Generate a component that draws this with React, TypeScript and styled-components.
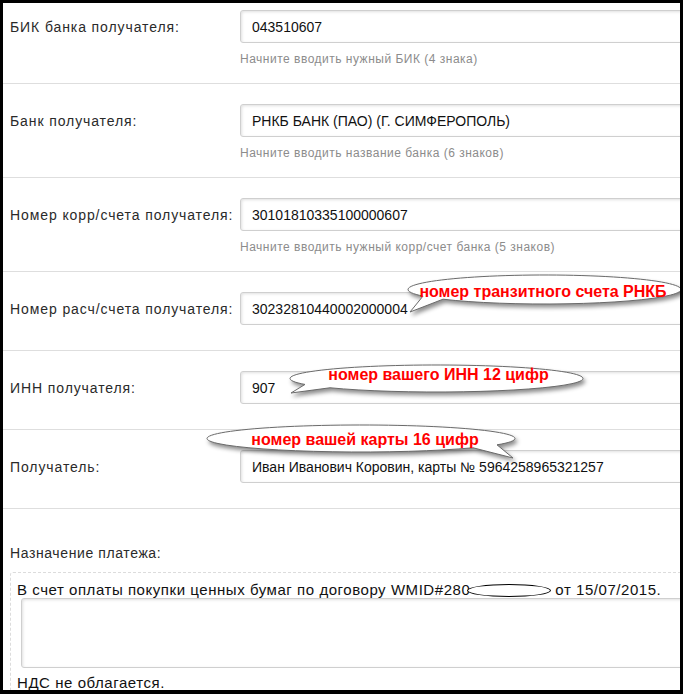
import React from "react";
import styled, { createGlobalStyle } from "styled-components";

const GlobalStyle = createGlobalStyle`
  html, body {
    margin: 0;
    padding: 0;
    background: #000;
  }
  body {
    font-family: "Liberation Sans", Arial, sans-serif;
  }
`;

const Frame = styled.div`
  width: 683px;
  height: 694px;
  box-sizing: border-box;
  padding: 3px 3px 4px 3px;
  background: #000;
`;

const Panel = styled.div`
  width: 100%;
  height: 100%;
  background: #fff;
  overflow: hidden;
`;

const Form = styled.div`
  margin-top: -13px;
`;

const Row = styled.div<{ $hint?: boolean }>`
  position: relative;
  display: grid;
  grid-template-columns: 230px 1fr;
  align-items: center;
  padding: 20px 0 ${(p) => (p.$hint ? 16 : 25)}px 7px;
  border-bottom: 1px solid #dedede;
`;

const Label = styled.div`
  font-size: 14px;
  letter-spacing: 0.9px;
  color: #2a2a2a;
  white-space: nowrap;
`;

const Field = styled.input`
  width: 520px;
  height: 33px;
  box-sizing: border-box;
  padding: 0 11px;
  border: 1px solid #cfcfcf;
  border-radius: 3px;
  box-shadow: inset 1px 1px 3px rgba(0, 0, 0, 0.12);
  font-family: "Liberation Sans", Arial, sans-serif;
  font-size: 14px;
  color: #111;
  background: #fff;
  outline: none;
`;

const Hint = styled.div`
  grid-column: 2;
  margin-top: 8px;
  font-size: 12px;
  letter-spacing: 0.5px;
  line-height: 16px;
  color: #8c8c8c;
  white-space: nowrap;
`;

const Purpose = styled.div`
  padding: 36px 0 0 7px;
`;

const PurposeTitle = styled.div`
  font-size: 14px;
  letter-spacing: 0.6px;
  line-height: 16px;
  color: #2a2a2a;
`;

const DashedBox = styled.div`
  margin-top: 11px;
  width: 700px;
  padding: 9px 0 0 6px;
  border: 1px dashed #dcdcdc;
  border-radius: 3px;
`;

const Line = styled.div`
  font-size: 15px;
  letter-spacing: 0.55px;
  line-height: 16px;
  color: #111;
  white-space: nowrap;
`;

const Redacted = styled.span`
  display: inline-block;
  width: 84px;
  height: 13px;
  margin: 0 4px 0 -3px;
  vertical-align: -2px;
  box-sizing: border-box;
  border: 1px solid #000;
  border-radius: 50%;
  background: #fff;
`;

const TextArea = styled.div`
  margin: 0 0 7px 4px;
  height: 70px;
  box-sizing: border-box;
  border: 1px solid #cfcfcf;
  border-radius: 3px;
  box-shadow: inset 1px 1px 3px rgba(0, 0, 0, 0.12);
`;

const BubbleBox = styled.div`
  position: absolute;
  pointer-events: none;
  z-index: 2;

  svg {
    position: absolute;
    left: 0;
    top: 0;
    overflow: visible;
    filter: drop-shadow(2px 3px 2px rgba(0, 0, 0, 0.45));
  }
`;

const BubbleText = styled.div`
  position: absolute;
  display: flex;
  align-items: center;
  justify-content: center;
  font-family: "Liberation Sans", Arial, sans-serif;
  font-weight: bold;
  font-size: 16px;
  color: #ff0000;
  white-space: nowrap;
`;

type CalloutProps = {
  cx: number;
  cy: number;
  rx: number;
  ry: number;
  tail: [number, number, number, number];
  shift?: [number, number];
  children: React.ReactNode;
};

const PAD = 8;

const Callout = ({ cx, cy, rx, ry, tail, shift = [0, 0], children }: CalloutProps) => {
  const [b1, b2, tipX, tipY] = tail;
  const x0 = Math.min(cx - rx, tipX) - PAD;
  const y0 = cy - ry - PAD;
  const w = Math.max(cx + rx, tipX) + PAD - x0;
  const h = Math.max(cy + ry, tipY) + PAD - y0;
  const lx = (x: number) => x - x0;
  const ly = (y: number) => y - y0;
  const edge = (x: number) => cy + ry * Math.sqrt(Math.max(0, 1 - ((x - cx) / rx) ** 2));
  const d = `M ${lx(b1)} ${ly(edge(b1))} L ${lx(tipX)} ${ly(tipY)} L ${lx(b2)} ${ly(edge(b2))} A ${rx} ${ry} 0 1 0 ${lx(b1)} ${ly(edge(b1))} Z`;

  return (
    <BubbleBox style={{ left: x0, top: y0, width: w, height: h }}>
      <svg width={w} height={h}>
        <path d={d} fill="#fff" stroke="#6a6a6a" strokeWidth={1} />
      </svg>
      <BubbleText
        style={{ left: lx(cx - rx) + shift[0], top: ly(cy - ry) + shift[1], width: rx * 2, height: ry * 2 }}
      >
        {children}
      </BubbleText>
    </BubbleBox>
  );
};

const fields = [
  { label: "БИК банка получателя:", value: "043510607", hint: "Начните вводить нужный БИК (4 знака)" },
  { label: "Банк получателя:", value: "РНКБ БАНК (ПАО) (Г. СИМФЕРОПОЛЬ)", hint: "Начните вводить название банка (6 знаков)" },
  {
    label: "Номер корр/счета получателя:",
    value: "30101810335100000607",
    hint: "Начните вводить нужный корр/счет банка (5 знаков)",
  },
];

const App = () => {
  return (
    <Frame>
      <GlobalStyle />
      <Panel>
        <Form>
          {fields.map((f) => (
            <Row $hint key={f.label}>
              <Label>{f.label}</Label>
              <Field readOnly value={f.value} />
              <Hint>{f.hint}</Hint>
            </Row>
          ))}
          <Row>
            <Label>Номер расч/счета получателя:</Label>
            <Field readOnly value="30232810440002000004" />
            <Callout cx={541.5} cy={17.5} rx={136.5} ry={14.5} tail={[420, 440, 407, 40]} shift={[-1.5, 2.5]}>
              номер транзитного счета РНКБ
            </Callout>
          </Row>
          <Row>
            <Label>ИНН получателя:</Label>
            <Field readOnly value="907" />
            <Callout cx={433.5} cy={27.5} rx={146.5} ry={13.5} tail={[302, 327, 288, 42]} shift={[2, -4]}>
              номер вашего ИНН 12 цифр
            </Callout>
          </Row>
          <Row>
            <Label>Получатель:</Label>
            <Field readOnly value="Иван Иванович Коровин, карты № 5964258965321257" />
            <Callout cx={358} cy={8.5} rx={154} ry={13.5} tail={[470, 494, 510, 28]} shift={[4, 1.5]}>
              номер вашей карты 16 цифр
            </Callout>
          </Row>
        </Form>
        <Purpose>
          <PurposeTitle>Назначение платежа:</PurposeTitle>
          <DashedBox>
            <Line>
              В счет оплаты покупки ценных бумаг по договору WMID#280
              <Redacted />
              от 15/07/2015.
            </Line>
            <TextArea />
            <Line>НДС не облагается.</Line>
          </DashedBox>
        </Purpose>
      </Panel>
    </Frame>
  );
};

export default App;
